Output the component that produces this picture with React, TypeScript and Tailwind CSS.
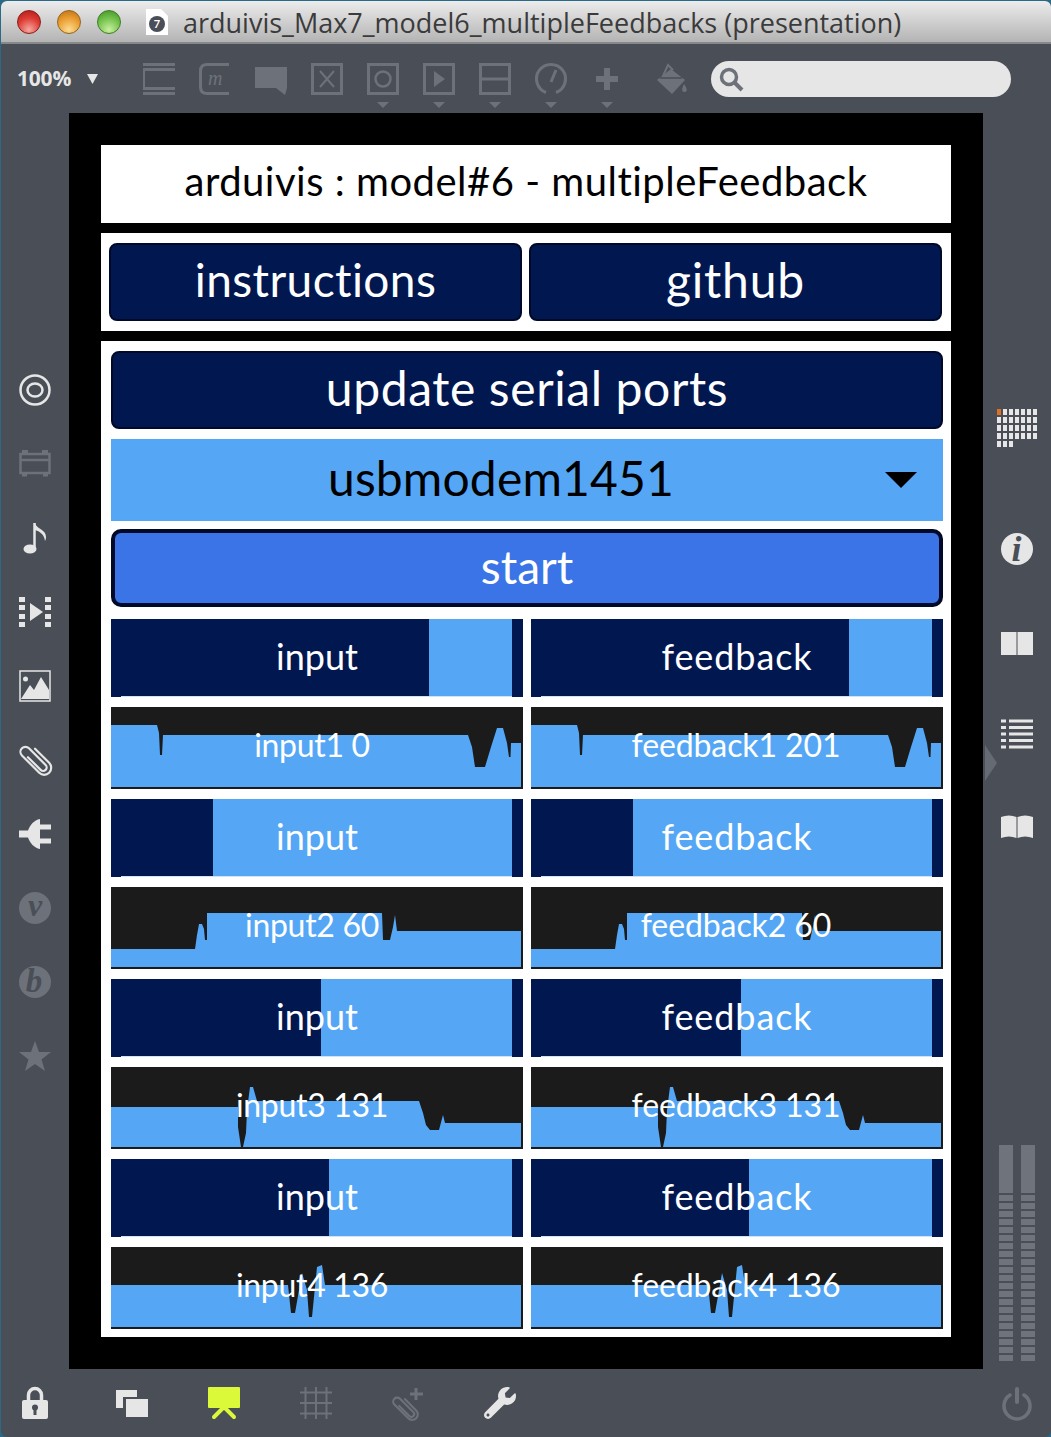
import { FaWrench } from "react-icons/fa";

const DIM = "#6d727a";
const LIGHT = "#e6e6e6";

function Icon({ children, w = 32, h = 32 }: { children: React.ReactNode; w?: number; h?: number }) {
  return (
    <svg width={w} height={h} viewBox={`0 0 ${w} ${h}`} className="block shrink-0 overflow-visible">
      {children}
    </svg>
  );
}

function Caret() {
  return (
    <svg width="12" height="6" viewBox="0 0 12 6" className="mt-[7px] block">
      <polygon points="0,0 12,0 6,6" fill={DIM} />
    </svg>
  );
}

function ToolIcon({ children, caret }: { children: React.ReactNode; caret?: boolean }) {
  return (
    <div className="flex w-[32px] flex-col items-center">
      <Icon>{children}</Icon>
      {caret && <Caret />}
    </div>
  );
}

const box = <rect x="1.5" y="1.5" width="29" height="29" fill="none" stroke={DIM} strokeWidth="3" />;

function TopToolbar() {
  return (
    <div className="flex h-[69px] items-start pt-[19px] bg-[#4a4f57]">
      <div className="flex h-[32px] w-[142px] items-center pl-[16px]">
        <span className="text-[21px] font-bold tracking-[-0.2px] text-[#e6e6e6] [font-family:'Open_Sans',sans-serif]">100%</span>
        <svg width="11" height="10" viewBox="0 0 11 10" className="ml-[16px]">
          <polygon points="0,0 11,0 5.5,10" fill={LIGHT} />
        </svg>
      </div>
      <div className="flex gap-[24px]">
        <ToolIcon>
          <path d="M0 1.5H32M0 6.5H32M0 25.5H32M0 30.5H32" stroke={DIM} strokeWidth="3" />
          <path d="M1 6V26" stroke={DIM} strokeWidth="2" />
        </ToolIcon>
        <ToolIcon>
          <path d="M30 1.5H8Q1.5 1.5 1.5 8V24Q1.5 30.5 8 30.5H30" fill="none" stroke={DIM} strokeWidth="3" />
          <text x="9" y="22" fontSize="20" fontStyle="italic" fontFamily="'Liberation Serif',serif" fill={DIM}>m</text>
        </ToolIcon>
        <ToolIcon>
          <polygon points="0,4 32,4 32,25 30,32 21,25 0,25" fill={DIM} />
        </ToolIcon>
        <ToolIcon>
          {box}
          <path d="M9 8L23 24M23 8L9 24" stroke={DIM} strokeWidth="2" />
        </ToolIcon>
        <ToolIcon caret>
          {box}
          <circle cx="16" cy="16" r="7.5" fill="none" stroke={DIM} strokeWidth="2.5" />
        </ToolIcon>
        <ToolIcon caret>
          {box}
          <polygon points="11,8 22,16 11,24" fill={DIM} />
        </ToolIcon>
        <ToolIcon caret>
          {box}
          <path d="M3 16H29" stroke={DIM} strokeWidth="3" />
        </ToolIcon>
        <ToolIcon caret>
          <path d="M11 29.5A14.5 14.5 0 1 1 21 29.5" fill="none" stroke={DIM} strokeWidth="3" />
          <path d="M16 19L21 7" stroke={DIM} strokeWidth="3" />
        </ToolIcon>
        <ToolIcon caret>
          <path d="M16 5V27M5 16H27" stroke={DIM} strokeWidth="6" />
        </ToolIcon>
      </div>
      <div className="ml-[32px]">
        <ToolIcon>
          <path d="M16 6L30 17L17 31L2 17Z" fill={DIM} />
          <path d="M8 13L13 2L18 7" fill="none" stroke={DIM} strokeWidth="2" />
          <path d="M5 15H27" stroke="#4a4f57" strokeWidth="1.5" />
          <path d="M29 21C32 25 33 29 29.5 29C26 29 27 25 29 21Z" fill={DIM} />
        </ToolIcon>
      </div>
      <div className="ml-[24px] -mt-[2px] flex h-[36px] w-[300px] items-center rounded-full bg-[#e6e6e6] pl-[6px]">
        <svg width="28" height="28" viewBox="0 0 28 28">
          <circle cx="12" cy="12" r="7.5" fill="none" stroke="#6d727a" strokeWidth="3.5" />
          <path d="M17.5 17.5L25 25" stroke="#6d727a" strokeWidth="4" />
        </svg>
      </div>
    </div>
  );
}

function LeftSidebar() {
  return (
    <div className="flex w-[68px] shrink-0 flex-col items-center gap-[42px] pt-[261px]">
      <Icon>
        <circle cx="16" cy="16" r="14.5" fill="none" stroke={LIGHT} strokeWidth="2.5" />
        <ellipse cx="16" cy="16" rx="7.5" ry="6.5" fill="none" stroke={LIGHT} strokeWidth="2.5" />
      </Icon>
      <Icon>
        <rect x="1.5" y="6" width="29" height="19" fill="none" stroke={DIM} strokeWidth="2.5" />
        <path d="M1 12H31" stroke={DIM} strokeWidth="2.5" />
        <path d="M3 3.5H9M23 3.5H29M3 27H8M24 27H29" stroke={DIM} strokeWidth="3" />
      </Icon>
      <Icon>
        <ellipse cx="11" cy="27" rx="6.5" ry="4.5" fill={LIGHT} />
        <path d="M15.5 27V1" stroke={LIGHT} strokeWidth="2.5" />
        <path d="M16 1C17 7 27 7 27 15C27 17 26.5 18 26 19C25 11 19 9 16 8Z" fill={LIGHT} />
      </Icon>
      <Icon>
        <path d="M3 1V6M3 9V14M3 18V23M3 26V31M29 1V6M29 9V14M29 18V23M29 26V31" stroke={LIGHT} strokeWidth="6" />
        <polygon points="11,7 24,16 11,25" fill={LIGHT} />
      </Icon>
      <Icon>
        <rect x="1" y="1" width="30" height="30" fill="none" stroke={LIGHT} strokeWidth="1.5" />
        <circle cx="6.5" cy="9" r="2.5" fill={LIGHT} />
        <polygon points="2,29 11,15 15,20 22,7 30,20 30,29" fill={LIGHT} />
      </Icon>
      <Icon>
        <g transform="rotate(-45 16 16)" fill="none" stroke={LIGHT} strokeWidth="2.2" strokeLinecap="round">
          <path d="M13 9V27A3.5 3.5 0 0 0 20 27V3.5A5 5 0 0 0 10 3.5V28A7 7 0 0 0 24 28V8" />
        </g>
      </Icon>
      <Icon>
        <path d="M0 12.5H9C11 7 15 2 21 1V31C15 30 11 25 9 19.5H0Z" fill={LIGHT} />
        <path d="M20 9H32M20 23H32" stroke={LIGHT} strokeWidth="5" />
      </Icon>
      <Icon>
        <circle cx="16" cy="16" r="16" fill={DIM} />
        <text x="16" y="24" textAnchor="middle" fontSize="32" fontWeight="700" fontStyle="italic" fontFamily="'Liberation Serif',serif" fill="#4a4f57">v</text>
      </Icon>
      <Icon>
        <circle cx="16" cy="16" r="16" fill={DIM} />
        <text x="15" y="26" textAnchor="middle" fontSize="33" fontWeight="700" fontStyle="italic" fontFamily="'Liberation Serif',serif" fill="#4a4f57">b</text>
      </Icon>
      <Icon>
        <polygon points="16,1 20,12 32,12 22.5,19.5 26,31 16,24 6,31 9.5,19.5 0,12 12,12" fill={DIM} />
      </Icon>
    </div>
  );
}

function DotGrid() {
  const cells: React.ReactNode[] = [];
  for (let row = 0; row < 5; row++) {
    for (let col = 0; col < (row === 4 ? 3 : 7); col++) {
      cells.push(
        <rect key={`${row}-${col}`} x={col * 6} y={row * 8} width="4" height="6" fill={row === 0 && col === 0 ? "#e0701e" : LIGHT} />
      );
    }
  }
  return (
    <svg width="40" height="38" viewBox="0 0 40 38" className="block">
      {cells}
    </svg>
  );
}

function Meter() {
  return (
    <div className="flex w-[14px] flex-col gap-[2px]">
      <div className="h-[48px] bg-[#6f747c]" />
      {Array.from({ length: 21 }, (_, i) => (
        <div key={i} className="h-[6px] bg-[#6f747c]" />
      ))}
    </div>
  );
}

function RightSidebar() {
  return (
    <div className="relative flex w-[67px] shrink-0 flex-col items-center pb-[8px] pt-[296px]">
      <svg width="12" height="36" viewBox="0 0 12 36" className="absolute left-[2px] top-[632px]">
        <polygon points="0,0 12,18 0,36" fill="#666b73" />
      </svg>
      <DotGrid />
      <div className="mt-[86px]">
        <Icon>
          <circle cx="16" cy="16" r="16" fill={LIGHT} />
          <text x="15.5" y="28" textAnchor="middle" fontSize="36" fontWeight="700" fontStyle="italic" fontFamily="'Liberation Serif',serif" fill="#4a4f57">i</text>
        </Icon>
      </div>
      <div className="mt-[67px]">
        <Icon h={23}>
          <rect x="0" y="0" width="15.5" height="23" fill={LIGHT} />
          <rect x="16.5" y="0" width="15.5" height="23" fill={LIGHT} />
        </Icon>
      </div>
      <div className="mt-[64px]">
        <Icon h={30}>
          <path d="M0 2H5M8 2H32M0 8.5H5M8 8.5H32M0 15H5M8 15H32M0 21.5H5M8 21.5H32M0 28H5M8 28H32" stroke={LIGHT} strokeWidth="3" />
        </Icon>
      </div>
      <div className="mt-[66px]">
        <Icon h={23}>
          <path d="M0 2Q8 -1 15.5 2V23Q8 20 0 23Z" fill={LIGHT} />
          <path d="M32 2Q24 -1 16.5 2V23Q24 20 32 23Z" fill={LIGHT} />
        </Icon>
      </div>
      <div className="mt-auto flex gap-[8px]">
        <Meter />
        <Meter />
      </div>
    </div>
  );
}

function BottomBar() {
  return (
    <div className="flex h-[68px] items-start pt-[18px]">
      <div className="ml-[18px] flex items-start">
        <Icon>
          <path d="M9.5 14V8A6.5 6.5 0 0 1 22.5 8V14" fill="none" stroke={LIGHT} strokeWidth="3.5" />
          <rect x="3" y="13" width="26" height="19" rx="2" fill={LIGHT} />
          <circle cx="16" cy="20.5" r="3" fill="#4a4f57" />
          <rect x="14.5" y="21" width="3" height="7" fill="#4a4f57" />
        </Icon>
      </div>
      <div className="ml-[65px] flex gap-[60px]">
        <Icon>
          <rect x="0" y="3" width="21" height="18" fill={LIGHT} />
          <rect x="7" y="10" width="25" height="19" fill="#4a4f57" />
          <rect x="10" y="12" width="22" height="18" fill={LIGHT} />
        </Icon>
        <Icon>
          <rect x="0" y="0" width="32" height="21" rx="1" fill="#dcf939" />
          <path d="M16 20L6 30M16 20L26 30" stroke="#dcf939" strokeWidth="4" strokeLinecap="round" />
        </Icon>
        <Icon>
          <path d="M0 5.5H32M0 16H32M0 26.5H32M5.5 0V32M16 0V32M26.5 0V32" stroke={DIM} strokeWidth="2" />
        </Icon>
        <Icon>
          <g transform="translate(-2 2) rotate(-45 14 20) scale(0.8) translate(3 9)" fill="none" stroke={DIM} strokeWidth="2.6" strokeLinecap="round">
            <path d="M13 9V27A3.5 3.5 0 0 0 20 27V3.5A5 5 0 0 0 10 3.5V28A7 7 0 0 0 24 28V8" />
          </g>
          <path d="M24 1V13M18 7H31" stroke={DIM} strokeWidth="3" />
        </Icon>
        <FaWrench size={32} color={LIGHT} className="block" />
      </div>
      <div className="ml-auto mr-[18px]">
        <Icon>
          <path d="M9 8A13 13 0 1 0 23 8" fill="none" stroke={DIM} strokeWidth="3.5" strokeLinecap="round" />
          <path d="M16 2V15" stroke={DIM} strokeWidth="4" strokeLinecap="round" />
        </Icon>
      </div>
    </div>
  );
}

function PillButton({ label, className }: { label: string; className: string }) {
  return (
    <div className={`flex items-center justify-center rounded-[8px] border-[2px] border-[#000a28] bg-[#01174f] pb-[4px] text-white ${className}`}>
      {label}
    </div>
  );
}

function Slider({ label, pos, className }: { label: string; pos: number; className?: string }) {
  return (
    <div className="relative flex h-[78px] items-center justify-center overflow-hidden bg-[#01174f] pb-[4px]">
      <div className="absolute bottom-0 right-[11px] top-0 bg-[#55a7f6]" style={{ left: pos }} />
      <div className="absolute bottom-0 left-[10px] right-[11px] h-[1px] bg-[#cfe4fb]" />
      <span className={`relative text-[36px] leading-none text-white ${className ?? ""}`}>{label}</span>
    </div>
  );
}

function Scope({ label, points, shift, className }: { label: string; points: string; shift: number; className?: string }) {
  return (
    <div className="relative flex h-[82px] items-center justify-center bg-[#1a1b1a]">
      <svg width="412" height="82" viewBox="0 0 412 82" className="absolute left-0 top-0">
        <polygon points={`0,80 ${points} 410,80`} fill="#55a7f6" />
      </svg>
      <span className={`relative -mt-[6px] text-[32px] leading-none whitespace-pre text-white ${className ?? ""}`} style={{ marginLeft: shift }}>
        {label}
      </span>
    </div>
  );
}

const waves = [
  "0,18 46,18 48,26 49,48 51,48 52,28 357,28 361,40 364,60 374,60 380,40 386,21 392,21 396,36 398,50 399.5,50 400,36 410,36",
  "0,62 84,62 86,48 88,37 91,37 93,42 94,53 96,53 96,26 271,26 272,53 279,53 282,40 284,28 286,44 410,44",
  "0,40 127,40 127,60 130,80 132,80 135,66 136,43 139,20 142,20 146,34 308,34 312,46 315,58 319,63 328,63 332,48 334,56 410,56",
  "0,38 177,38 180,66 184,66 191,26 196,43 198,70 201,70 206,20 211,18 214,38 410,38",
];

const channels = [
  { pos: 318, inputValue: "input1 0", feedbackValue: "feedback1 201" },
  { pos: 102, inputValue: "input2 60", feedbackValue: "feedback2 60" },
  { pos: 210, inputValue: "input3 131", feedbackValue: "feedback3 131" },
  { pos: 218, inputValue: "input4 136", feedbackValue: "feedback4 136" },
];

function Patcher() {
  return (
    <div className="flex w-[914px] shrink-0 flex-col gap-[10px] bg-black p-[32px]">
      <div className="flex h-[78px] items-center justify-center bg-white pb-[6px] text-[40px] leading-none tracking-[0.5px] text-black">
        arduivis : model#6 - multipleFeedback
      </div>
      <div className="flex h-[98px] gap-[7px] bg-white pb-[10px] pl-[8px] pr-[9px] pt-[10px]">
        <PillButton label="instructions" className="flex-1 text-[46px] leading-none tracking-[0.4px]" />
        <PillButton label="github" className="flex-1 text-[48px] leading-none tracking-[0.8px]" />
      </div>
      <div className="flex flex-col bg-white pb-[8px] pl-[10px] pr-[8px] pt-[10px]">
        <PillButton label="update serial ports" className="h-[78px] text-[48px] leading-none tracking-[0.6px]" />
        <div className="relative mt-[10px] flex h-[82px] items-center justify-center bg-[#55a7f6] pb-[4px] pr-[52px] text-[48px] leading-none tracking-[0.15px] text-black">
          usbmodem1451
          <svg width="32" height="16" viewBox="0 0 32 16" className="absolute right-[26px] top-[33px]">
            <polygon points="0,0 32,0 16,16" fill="#000" />
          </svg>
        </div>
        <div className="mt-[8px] flex h-[78px] items-center justify-center rounded-[10px] border-[4px] border-[#000a28] bg-[#3b74e6] pb-[2px] text-[46px] leading-none text-white">
          start
        </div>
        <div className="mt-[12px] grid grid-cols-2 gap-x-[8px] gap-y-[10px]">
          {channels.map((c, i) => (
            <div key={c.inputValue} className="col-span-2 grid grid-cols-2 gap-x-[8px] gap-y-[10px]">
              <Slider label="input" pos={c.pos} />
              <Slider label="feedback" pos={c.pos} className="tracking-[0.9px]" />
              <Scope label={c.inputValue} points={waves[i]} shift={-10} className="tracking-[-0.3px]" />
              <Scope label={c.feedbackValue} points={waves[i]} shift={-2} className="tracking-[-0.1px]" />
            </div>
          ))}
        </div>
      </div>
    </div>
  );
}

export default function App() {
  return (
    <div className="h-[1437px] w-[1051px] overflow-hidden bg-[#2a6a88] pl-[1px] pt-[1px] [font-family:Lato,sans-serif]">
      <div className="flex h-[1436px] w-[1050px] flex-col overflow-hidden rounded-[6px] bg-[#4a4f57]">
        <div className="flex h-[43px] shrink-0 items-center border-b-[2px] border-[#86888a] bg-gradient-to-b from-[#ececec] to-[#b4b4b4] pl-[16px]">
          <div className="h-[24px] w-[24px] rounded-full border border-[#8a1c18] bg-[radial-gradient(circle_at_50%_85%,#f7a8a0,#dc3a32_55%,#a81d18)]" />
          <div className="ml-[16px] h-[24px] w-[24px] rounded-full border border-[#94641a] bg-[radial-gradient(circle_at_50%_85%,#fbdc90,#ea9c30_55%,#b86e14)]" />
          <div className="ml-[16px] h-[24px] w-[24px] rounded-full border border-[#3f7d22] bg-[radial-gradient(circle_at_50%_85%,#c8f0a0,#72c14a_55%,#3f8f26)]" />
          <svg width="22" height="26" viewBox="0 0 22 26" className="ml-[25px]">
            <polygon points="0,0 15,0 22,7 22,26 0,26" fill="#fff" />
            <circle cx="11" cy="15" r="8" fill="#4a4f57" />
            <text x="11" y="19" textAnchor="middle" fontSize="11" fontWeight="700" fill="#fff">7</text>
          </svg>
          <span className="ml-[15px] mt-[2px] text-[27px] leading-none whitespace-nowrap text-[#3b3b3b] [font-family:'Open_Sans',sans-serif]">
            arduivis_Max7_model6_multipleFeedbacks (presentation)
          </span>
        </div>
        <TopToolbar />
        <div className="flex">
          <LeftSidebar />
          <Patcher />
          <RightSidebar />
        </div>
        <BottomBar />
      </div>
    </div>
  );
}
